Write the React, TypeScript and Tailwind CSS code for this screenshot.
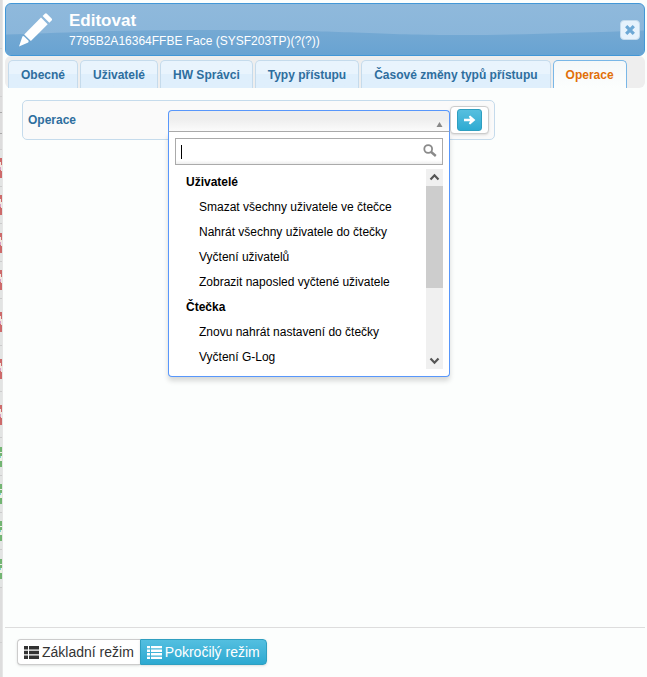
import { useState } from "react";

const tabs = [
  "Obecné",
  "Uživatelé",
  "HW Správci",
  "Typy přístupu",
  "Časové změny typů přístupu",
  "Operace",
];

const groups = [
  {
    label: "Uživatelé",
    options: [
      "Smazat všechny uživatele ve čtečce",
      "Nahrát všechny uživatele do čtečky",
      "Vyčtení uživatelů",
      "Zobrazit naposled vyčtené uživatele",
    ],
  },
  {
    label: "Čtečka",
    options: ["Znovu nahrát nastavení do čtečky", "Vyčtení G-Log"],
  },
];

// Visible edge of the table that lies under the dialog
const rows = [
  { size: "h-[49px] border-[#cfcfcf]", mark: "" },
  { size: "h-12 border-[#cfcfcf]", mark: "" },
  { size: "h-4 border-[#aaaaaa]", mark: "" },
  { size: "h-[21px] border-[#aaaaaa]", mark: "" },
  { size: "h-4 border-[#cfcfcf]", mark: "" },
  { size: "h-[37px] border-[#cccccc]", mark: "red" },
  { size: "h-[37px] border-[#cccccc]", mark: "red" },
  { size: "h-[38px] border-[#cccccc]", mark: "red" },
  { size: "h-[37px] border-[#cccccc]", mark: "red" },
  { size: "h-[47px] border-[#cccccc]", mark: "red" },
  { size: "h-[46px] border-[#cccccc]", mark: "red" },
  { size: "h-[46px] border-[#cccccc]", mark: "red" },
  { size: "h-[38px] border-[#cccccc]", mark: "green" },
  { size: "h-[37px] border-[#cccccc]", mark: "green" },
  { size: "h-[37px] border-[#cccccc]", mark: "green" },
  { size: "h-[38px] border-[#cccccc]", mark: "green" },
  { size: "h-[55px] border-[#cfcfcf]", mark: "" },
];

function StatusMark({ color }: { color: string }) {
  if (color === "red") {
    return (
      <svg className="h-5 w-0.5" viewBox="0 0 2 20" aria-hidden="true">
        <path d="M0 0H2V20H0Z" fill="#cd6a6a" />
        <path d="M0 4H1V7H2V13H1V9H0Z" fill="#f1e6de" />
        <path d="M0 9H1V12H0Z" fill="#d6a0c8" />
      </svg>
    );
  }
  return (
    <svg className="h-5 w-0.5" viewBox="0 0 2 20" aria-hidden="true">
      <path d="M0 0H2V5H0ZM0 6H2V9H0ZM0 14H2V20H0Z" fill="#72b572" />
      <path d="M0 5H2V6H0ZM0 9H2V14H0Z" fill="#eef2e6" />
      <path d="M0 9H1V11H0Z" fill="#7fd0d0" />
    </svg>
  );
}

function PencilIcon() {
  return (
    <svg className="size-[34px] shrink-0" viewBox="0 0 34 34" fill="#fff" aria-hidden="true">
      <path d="M0 33.4 3.4 23.4Q4.2 22.6 5.2 23.4L9.3 27.6Q10.1 28.6 9.2 29.4Z" />
      <path d="M5.2 21.4 22 4.6 28.7 11.3 11.9 28.1Z" />
      <path d="M23.6 3 25.9 .7Q26.9-.2 27.9 .7L32.6 5.4Q33.5 6.4 32.6 7.4L30.3 9.7Z" />
    </svg>
  );
}

function ListIcon() {
  return (
    <svg className="h-[13px] w-[15px]" viewBox="0 0 15 13" fill="currentColor" aria-hidden="true">
      <path d="M0 0h4v3.6H0zM5 0h10v3.6H5zM0 4.7h4v3.6H0zM5 4.7h10v3.6H5zM0 9.4h4V13H0zM5 9.4h10V13H5z" />
    </svg>
  );
}

function ThinListIcon() {
  return (
    <svg className="h-[13px] w-[15px]" viewBox="0 0 15 13" fill="currentColor" aria-hidden="true">
      <path d="M0 0h3v2.3H0zM4 0h11v2.3H4zM0 3.6h3v2.3H0zM4 3.6h11v2.3H4zM0 7.1h3v2.3H0zM4 7.1h11v2.3H4zM0 10.7h3V13H0zM4 10.7h11V13H4z" />
    </svg>
  );
}

function Header() {
  return (
    <header className="relative flex h-[53px] items-center overflow-hidden rounded-md border border-[#4297d7] bg-linear-to-b from-[#8fb9dc] to-[#87b4d9] pr-1 pl-[13px] text-white">
      <svg
        className="absolute inset-0 h-full w-full"
        viewBox="0 0 640 51"
        preserveAspectRatio="none"
        aria-hidden="true"
      >
        <defs>
          <linearGradient id="wave" x1="0" y1="0" x2="0" y2="1">
            <stop offset="0" stopColor="#75a9d3" />
            <stop offset="1" stopColor="#68a3d2" />
          </linearGradient>
        </defs>
        <path
          d="M0 30.5C50 29 110 26 190 26S310 27 350 28.5S410 31 460 31S580 28.5 640 26.5V51H0Z"
          fill="url(#wave)"
        />
      </svg>
      <div className="relative flex grow items-center gap-4">
        <PencilIcon />
        <div className="pt-0.5">
          <h1 className="text-[17px] leading-5 font-bold">Editovat</h1>
          <p className="text-xs leading-5">7795B2A16364FFBE Face (SYSF203TP)(?(?))</p>
        </div>
      </div>
      <button
        type="button"
        aria-label="Zavřít"
        className="relative flex size-5 items-center justify-center rounded border border-[#c5dbec] bg-[#e6f2fc]"
      >
        <svg className="size-2.5" viewBox="0 0 10 10" stroke="#6da8d5" strokeWidth="3.2" aria-hidden="true">
          <path d="M1.2 1.2 8.8 8.8M8.8 1.2 1.2 8.8" />
        </svg>
      </button>
    </header>
  );
}

function OperationSelect() {
  const [query, setQuery] = useState("");

  return (
    <div className="relative w-[282px] pt-0.5">
      <button
        type="button"
        id="operation"
        aria-haspopup="listbox"
        aria-expanded="true"
        aria-labelledby="operation-label"
        className="flex h-[22px] w-full items-end justify-end rounded-t border border-b-[#aaaaaa] border-[#5897fb] bg-linear-to-b from-[#eeeeee] from-40% to-[#fbfbfb] pr-1.5 pb-1"
      >
        <svg className="h-[5px] w-[7px]" viewBox="0 0 7 5" fill="#888" aria-hidden="true">
          <path d="M3.5 0 6.5 5H.5Z" />
        </svg>
      </button>
      <div className="absolute top-full left-0 z-10 w-full rounded-b border border-t-0 border-[#5897fb] bg-white px-1.5 pt-1.5 pb-[7px] shadow-[0_4px_5px_rgba(0,0,0,0.15)]">
        <div className="relative">
          <input
            type="text"
            aria-label="Hledat operaci"
            value={query}
            onChange={(e) => setQuery(e.target.value)}
            className="block h-[27px] w-full border border-[#aaaaaa] bg-linear-to-b from-white from-85% to-[#eeeeee] pr-6 pl-1.5 text-xs outline-none"
          />
          <span className="absolute top-[7px] left-1.5 h-3.5 w-px bg-black" />
          <svg
            className="absolute top-1.5 right-1.5 size-[14px]"
            viewBox="0 0 14 14"
            fill="none"
            stroke="#8a8a8a"
            aria-hidden="true"
          >
            <circle cx="5.2" cy="5" r="3.9" strokeWidth="1.8" />
            <path d="M8.2 8 12.8 12" strokeWidth="2.4" />
          </svg>
        </div>
        <div className="mt-1 flex h-[200px]">
          <ul
            role="listbox"
            aria-labelledby="operation-label"
            className="grow overflow-hidden pt-px text-xs leading-[25px] text-black"
          >
            {groups.map((group) => (
              <li key={group.label} role="presentation">
                <strong className="block pl-[11px]">{group.label}</strong>
                <ul role="group" aria-label={group.label}>
                  {group.options.map((option) => (
                    <li key={option} role="option" aria-selected="false" className="pl-6">
                      {option}
                    </li>
                  ))}
                </ul>
              </li>
            ))}
          </ul>
          <div className="flex w-[17px] shrink-0 flex-col bg-[#f0f0f0]">
            <svg className="h-[17px] w-full" viewBox="0 0 17 17" fill="none" stroke="#555" strokeWidth="2.2" aria-hidden="true">
              <path d="M4.5 10.5 8.5 6.3 12.5 10.5" />
            </svg>
            <div className="h-[102px] bg-[#cdcdcd]" />
            <svg className="mt-auto h-[17px] w-full" viewBox="0 0 17 17" fill="none" stroke="#555" strokeWidth="2.2" aria-hidden="true">
              <path d="M4.5 6.5 8.5 10.7 12.5 6.5" />
            </svg>
          </div>
        </div>
      </div>
    </div>
  );
}

export default function App() {
  const [active, setActive] = useState("Operace");

  return (
    <div className="flex min-h-screen bg-[#fcfefd] font-['Liberation_Sans',Arial,sans-serif]">
      <div className="flex w-[3px] shrink-0 flex-col border-r border-[#e6e6e6] bg-[#dddddd]">
        {rows.map((row, i) => (
          <div
            key={i}
            className={`flex flex-col justify-center border-b ${row.size} ${row.mark ? "bg-[#e2e4e3]" : ""}`}
          >
            {row.mark && <StatusMark color={row.mark} />}
          </div>
        ))}
      </div>

      <div className="flex min-w-0 grow flex-col pt-[3px] pr-0.5 pl-0.5">
        <Header />

        <nav role="tablist" className="flex h-8 items-end gap-0.5 rounded-md bg-[#eeeeee] pl-[3px]">
          {tabs.map((tab) => (
            <button
              key={tab}
              type="button"
              role="tab"
              aria-selected={tab === active}
              onClick={() => setActive(tab)}
              className={
                tab === active
                  ? "h-7 rounded-t-[5px] border border-b-0 border-[#79b7e7] bg-linear-to-b from-[#f5f8f9] to-[#fcfefd] px-3 text-xs font-bold whitespace-nowrap text-[#e17009]"
                  : "h-7 rounded-t-[5px] border border-b-0 border-[#c5dbec] bg-linear-to-b from-[#e9f4fd] from-50% to-[#dfeffc] to-50% px-3 text-xs font-bold whitespace-nowrap text-[#2e6e9e]"
              }
            >
              {tab}
            </button>
          ))}
        </nav>

        <main className="grow px-[17px] pt-3">
          <div className="flex h-10 w-[473px] items-center rounded-[5px] border border-[#c5dbec] bg-[#fafafa] pr-[5px] pl-[5px]">
            <span id="operation-label" className="grow text-xs font-bold text-[#2e6e9e]">
              Operace
            </span>
            <OperationSelect />
            <div className="flex h-7 w-[39px] items-center justify-center rounded border border-[#cccccc] bg-white shadow-sm">
              <button
                type="button"
                aria-label="Provést"
                className="flex h-[22px] w-[25px] items-center justify-center rounded-[3px] border border-[#2f9fc0] bg-linear-to-b from-[#56bfdf] to-[#2dabd2]"
              >
                <svg className="h-2.5 w-[13px]" viewBox="0 0 13 10" fill="#fff" aria-hidden="true">
                  <path d="M1 3.8H7L5.8 1.6 7.2.4 12.4 5 7.2 9.6 5.8 8.4 7 6.2H1Z" />
                </svg>
              </button>
            </div>
          </div>
        </main>

        <footer className="flex h-[50px] border-t border-[#dddddd] px-3 pt-[11px] text-sm">
          <button
            type="button"
            className="flex h-[26px] items-center gap-[3px] rounded-l border border-r-0 border-[#cccccc] bg-white px-1.5 whitespace-nowrap text-[#333333] shadow-sm"
          >
            <ListIcon />
            Základní režim
          </button>
          <button
            type="button"
            className="flex h-[26px] items-center gap-[3px] rounded-r border border-[#2f9fc0] bg-linear-to-b from-[#53bfe0] to-[#2ca9d1] px-1.5 whitespace-nowrap text-white shadow-sm"
          >
            <ThinListIcon />
            Pokročilý režim
          </button>
        </footer>
      </div>
    </div>
  );
}
